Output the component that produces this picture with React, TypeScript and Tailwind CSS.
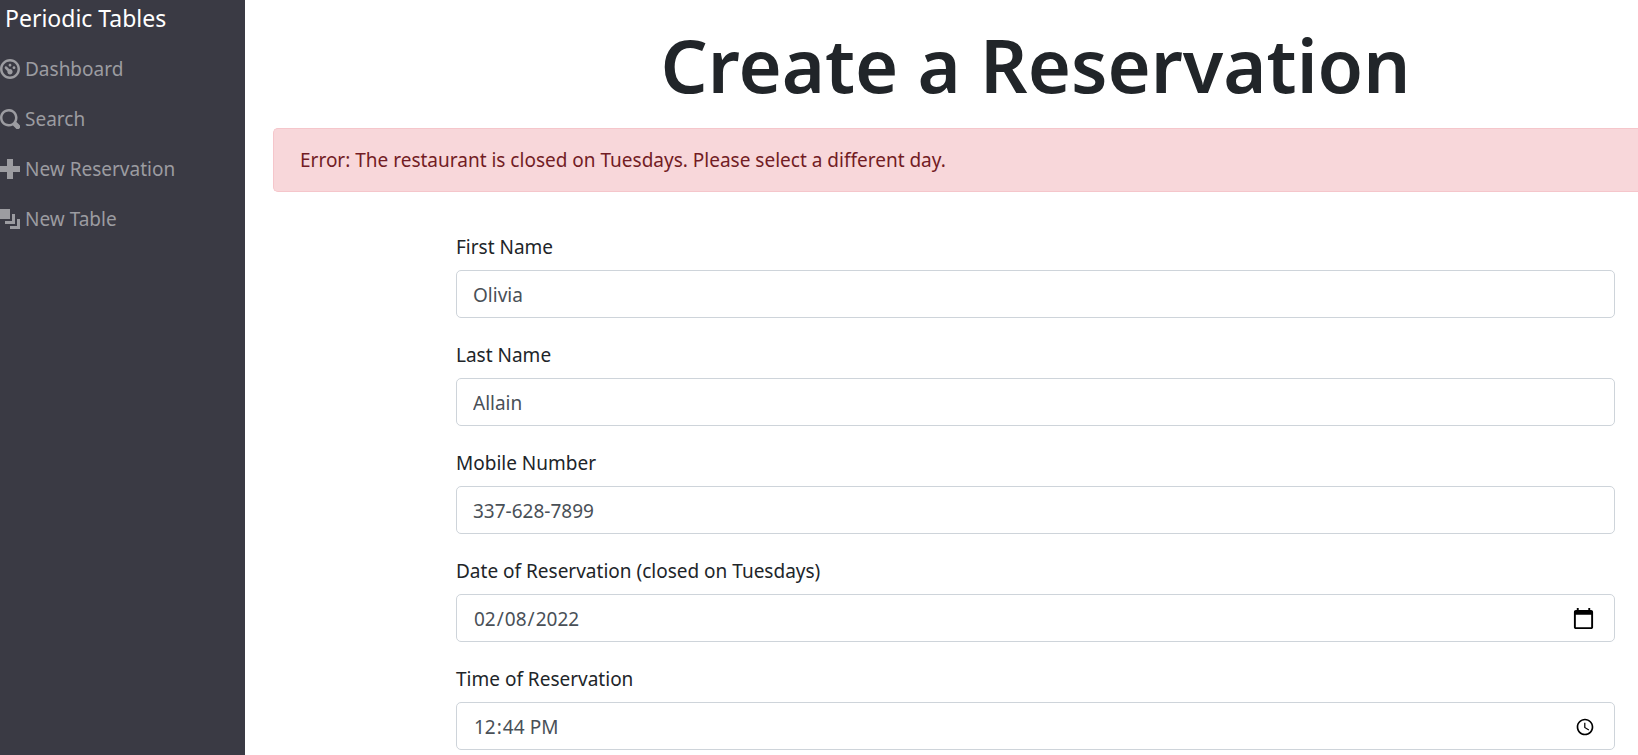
import React, { useState } from "react";

type NavEntry = { label: string; path: string };

const NAV: NavEntry[] = [
  {
    label: "Dashboard",
    path: "M4 0c-2.2 0-4 1.8-4 4s1.8 4 4 4 4-1.8 4-4-1.8-4-4-4zm0 1c1.66 0 3 1.34 3 3s-1.34 3-3 3-3-1.34-3-3 1.34-3 3-3zm0 .9c-.3 0-.55.25-.55.55s.25.55.55.55.55-.25.55-.55-.25-.55-.55-.55zm-1.7 1a.55.55 0 0 0-.25.95l.95 1c-.02.08-.06.16-.06.25 0 .6.48 1.08 1.06 1.08s1.06-.48 1.06-1.08-.48-1.1-1.06-1.1c-.09 0-.17.04-.25.06l-.95-.96a.55.55 0 0 0-.5-.2zm3.3 0c-.3 0-.55.25-.55.55s.25.55.55.55.55-.25.55-.55-.25-.55-.55-.55z",
  },
  {
    label: "Search",
    path: "M3.5 0c-1.93 0-3.5 1.57-3.5 3.5s1.57 3.5 3.5 3.5c.59 0 1.17-.14 1.66-.41a1 1 0 0 0 .13.13l1 1a1.02 1.02 0 1 0 1.44-1.44l-1-1a1 1 0 0 0-.16-.13c.27-.49.44-1.06.44-1.66 0-1.93-1.55-3.5-3.5-3.5zm0 1c1.39 0 2.5 1.11 2.5 2.5 0 .66-.24 1.27-.66 1.72-.01.01-.02.02-.03.03a1 1 0 0 0-.13.13c-.44.4-1.04.63-1.69.63-1.39 0-2.5-1.11-2.5-2.5s1.11-2.5 2.5-2.5z",
  },
  { label: "New Reservation", path: "M2.8 0v2.8h-2.8v2.4h2.8v2.8h2.4v-2.8h2.8v-2.4h-2.8v-2.8h-2.4z" },
  {
    label: "New Table",
    path: "M0 0v4h4v-4h-4zm4.8 2v2.8h-2.8v1.2h4v-4h-1.2zm2 2v2.8h-2.8v1.2h4v-4h-1.2z",
  },
];

type Field = { id: string; label: string; type: string; value: string };

const FIELDS: Field[] = [
  { id: "first_name", label: "First Name", type: "text", value: "Olivia" },
  { id: "last_name", label: "Last Name", type: "text", value: "Allain" },
  { id: "mobile_number", label: "Mobile Number", type: "tel", value: "337-628-7899" },
  {
    id: "reservation_date",
    label: "Date of Reservation (closed on Tuesdays)",
    type: "date",
    value: "2022-02-08",
  },
  { id: "reservation_time", label: "Time of Reservation", type: "time", value: "12:44" },
];

function Sidebar() {
  return (
    <aside className="w-[245px] shrink-0 bg-[#3a3a44]">
      <a href="#" className="block px-[5px] pt-[2px] text-[23px] leading-[32px] text-white">
        Periodic Tables
      </a>
      <nav className="mt-[20px] flex flex-col gap-[20px]">
        {NAV.map((item) => (
          <a
            key={item.label}
            href="#"
            className="flex items-center gap-[5px] text-[19px] leading-[30px] text-[#9c9ca1]"
          >
            <svg viewBox="0 0 8 8" className="size-5" fill="currentColor" aria-hidden="true">
              <path d={item.path} />
            </svg>
            {item.label}
          </a>
        ))}
      </nav>
    </aside>
  );
}

function FormField({ field }: { field: Field }) {
  const [value, setValue] = useState(field.value);
  const picker =
    field.type === "date" ? "[&::-webkit-calendar-picker-indicator]:size-[25px]" : "";
  return (
    <div className="flex flex-col gap-[8px]">
      <label htmlFor={field.id} className="text-[19px] leading-[30px] text-[#212529]">
        {field.label}
      </label>
      <input
        id={field.id}
        type={field.type}
        value={value}
        onChange={(e) => setValue(e.target.value)}
        className={`h-12 w-full rounded-[5px] border border-[#ced4da] bg-white px-4 pt-[2px] text-[19px] text-[#495057] ${picker}`}
      />
    </div>
  );
}

export default function App() {
  return (
    <div className="flex min-h-screen bg-white font-['Noto_Sans','Open_Sans',sans-serif]">
      <Sidebar />
      <main className="min-w-0 flex-1 pl-7">
        <h1 className="mr-[23px] ml-[183px] pt-[17px] text-center text-[74px] leading-[96px] font-semibold text-[#212529]">
          Create a Reservation
        </h1>
        <div
          role="alert"
          className="mt-[15px] rounded-l-[5px] border border-r-0 border-[#f5c6cb] bg-[#f8d7da] px-[26px] py-4 text-[19px] leading-[30px] text-[#721c24]"
        >
          Error: The restaurant is closed on Tuesdays. Please select a different day.
        </div>
        <form className="mt-[40px] mr-[23px] ml-[183px] flex flex-col gap-[22px]">
          {FIELDS.map((field) => (
            <FormField key={field.id} field={field} />
          ))}
        </form>
      </main>
    </div>
  );
}
